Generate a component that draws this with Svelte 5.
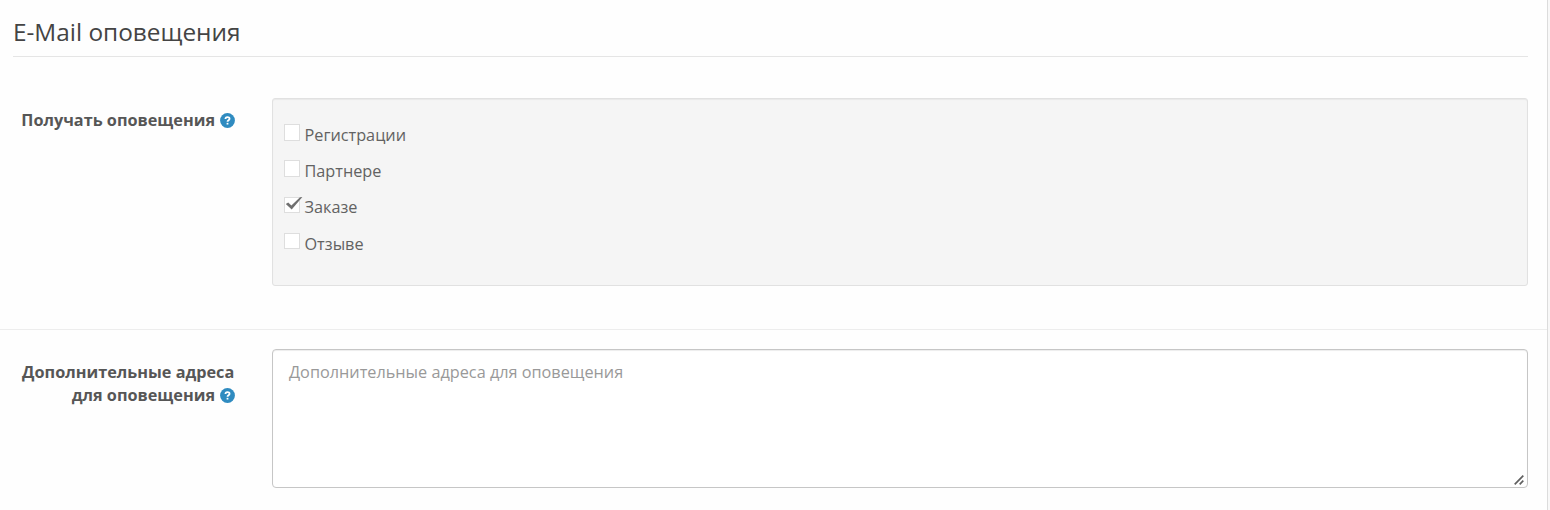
<script>
	let options = $state([
		{ label: 'Регистрации', checked: false },
		{ label: 'Партнере', checked: false },
		{ label: 'Заказе', checked: true },
		{ label: 'Отзыве', checked: false }
	]);
	let addresses = $state('');
</script>

{#snippet help()}
	<svg class="help" viewBox="0 0 16 16" aria-hidden="true">
		<circle cx="8" cy="8" r="7.9" />
		<path d="M5.8 6.4C5.8 3.6 10.2 3.7 10.2 6.1C10.2 7.7 8 7.6 8 9.2" />
		<path d="M8 10.5V12.3" />
	</svg>
{/snippet}

<main>
	<fieldset>
		<legend>E-Mail оповещения</legend>
		<div class="group alerts">
			<span class="title">Получать оповещения {@render help()}</span>
			<div class="well">
				{#each options as option (option.label)}
					<label class="option">
						<input type="checkbox" bind:checked={option.checked} />
						<span class="box">
							{#if option.checked}
								<svg class="tick" viewBox="0 0 18 16">
									<path d="M0.8 8L3.2 6.6L6.4 9.6L15 1.2L17.4 0.9L6.7 13.6Z" />
								</svg>
							{/if}
						</span>
						<span>{option.label}</span>
					</label>
				{/each}
			</div>
		</div>
		<div class="group extra">
			<label class="title" for="addresses">Дополнительные адреса для оповещения {@render help()}</label>
			<div class="field">
				<textarea id="addresses" placeholder="Дополнительные адреса для оповещения" bind:value={addresses}
				></textarea>
				<svg class="grip" viewBox="0 0 10 10" aria-hidden="true">
					<path d="M0.7 9.3L9.3 0.7M5.7 9.3L9.3 5.7" />
				</svg>
			</div>
		</div>
	</fieldset>
</main>

<style>
	:global(body) {
		background: #f8f8f8;
	}
	main {
		box-sizing: border-box;
		width: 1548px;
		height: 510px;
		overflow: hidden;
		border-right: 1px solid #dcdcdc;
		background: #fefefe;
		font-family: 'Open Sans', sans-serif;
		font-size: 16.25px;
		line-height: 23px;
		color: #626262;
	}
	fieldset {
		margin: 0;
		padding: 0;
		border: 0;
		min-width: 0;
	}
	legend {
		box-sizing: border-box;
		width: 1515px;
		height: 57px;
		margin-left: 13px;
		padding: 15px 0 0;
		border-bottom: 1px solid #e5e5e5;
		font-size: 24.375px;
		line-height: 34px;
		color: #444;
	}
	.group {
		display: grid;
		grid-template-columns: 234.3px 1256px;
		column-gap: 37.7px;
		align-items: start;
	}
	.alerts {
		padding: 41px 0 43px;
	}
	.extra {
		padding-top: 19px;
		border-top: 1px solid #ededed;
	}
	.title {
		padding: 11px 0 0 13px;
		font-weight: 700;
		text-align: right;
		color: #565656;
	}
	.extra .title {
		padding-top: 12px;
	}
	.help {
		width: 15px;
		height: 15px;
		margin: 0 -0.6px 0 0.6px;
		vertical-align: -1.7px;
	}
	.help circle {
		fill: #2f8bc0;
	}
	.help path {
		fill: none;
		stroke: #fff;
		stroke-width: 1.9;
	}
	.well {
		box-sizing: border-box;
		height: 188px;
		padding: 18px 11px;
		border: 1px solid #e1e1e1;
		border-radius: 3px;
		background: #f5f5f5;
		box-shadow: inset 0 1px 1px rgba(0, 0, 0, 0.05);
	}
	.option {
		display: flex;
		align-items: flex-start;
		gap: 4.5px;
		height: 36.2px;
		line-height: 36px;
	}
	.option input {
		position: absolute;
		opacity: 0;
	}
	.box {
		position: relative;
		box-sizing: border-box;
		width: 16px;
		height: 16.4px;
		margin-top: 7.3px;
		border: 1px solid #dedede;
		background: #fff;
	}
	.tick {
		position: absolute;
		left: 0;
		top: -1.5px;
		width: 18px;
		height: 16px;
		fill: #707070;
	}
	.field {
		position: relative;
		height: 139px;
	}
	textarea {
		display: block;
		box-sizing: border-box;
		width: 100%;
		height: 100%;
		margin: 0;
		padding: 11px 16px;
		border: 1px solid #c6c6c6;
		border-radius: 4px;
		outline: 0;
		resize: none;
		background: #fff;
		box-shadow: inset 0 1px 1px rgba(0, 0, 0, 0.075);
		font: inherit;
		color: #555;
	}
	textarea::placeholder {
		color: #999;
	}
	.grip {
		position: absolute;
		right: 4px;
		bottom: 3px;
		width: 10px;
		height: 10px;
		fill: none;
		stroke: #606060;
		stroke-width: 1.7;
	}
</style>
